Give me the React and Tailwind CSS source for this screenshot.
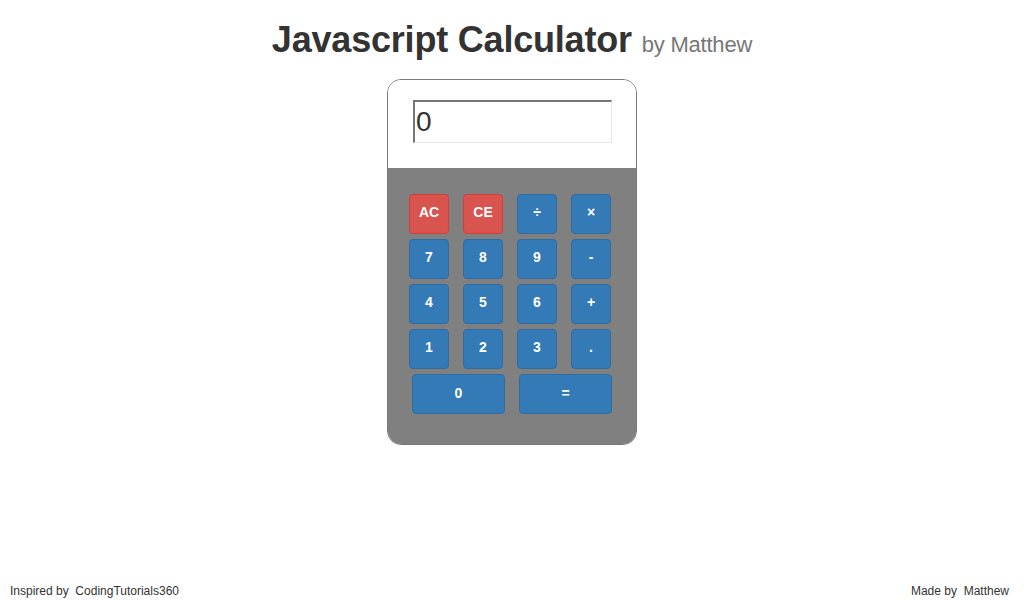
export default function App() {
  const rows = [
    [['AC', 'red'], ['CE', 'red'], ['÷', 'blue'], ['×', 'blue']],
    [['7', 'blue'], ['8', 'blue'], ['9', 'blue'], ['-', 'blue']],
    [['4', 'blue'], ['5', 'blue'], ['6', 'blue'], ['+', 'blue']],
    [['1', 'blue'], ['2', 'blue'], ['3', 'blue'], ['.', 'blue']],
  ];

  const btn = (kind) =>
    kind === 'red'
      ? 'bg-[#d9534f] border-[#d43f3a]'
      : 'bg-[#337ab7] border-[#2e6da4]';

  return (
    <div className="h-[600px] flex flex-col bg-white text-[#333] font-['Liberation_Sans',Arial,sans-serif]">
      {/* Heading */}
      <h1 className="mt-[20px] text-center text-[36px] leading-[40px] font-bold tracking-[-0.2px] text-[#333]">
        Javascript Calculator{' '}
        <span className="text-[22px] font-normal tracking-[-0.2px] text-[#777]">by Matthew</span>
      </h1>

      {/* Calculator body */}
      <div className="mx-auto mt-[14px] w-[250px] rounded-[14px] border border-[#7a7a7a] overflow-hidden">
        <div className="bg-white pt-[20px] pb-[25px] pl-[25px]">
          <div className="w-[199px] h-[43px] border-t-2 border-l-2 border-r border-b border-t-[#767676] border-l-[#767676] border-r-[#e8e8e8] border-b-[#e8e8e8] pl-[1px] flex items-center text-[28px] text-[#333]">
            0
          </div>
        </div>
        <div className="bg-[#808080] pt-[26px] pb-[30px] pl-[21px]">
          <div className="flex flex-col gap-[5px]">
            {rows.map((row, i) => (
              <div key={i} className="flex gap-[14px]">
                {row.map(([label, kind]) => (
                  <button key={label}
                    className={`w-[40px] h-[40px] rounded-[4px] border ${btn(kind)} text-white text-[14px] font-bold leading-[20px] pb-[5px] flex items-center justify-center`}>
                    {label}
                  </button>
                ))}
              </div>
            ))}
            <div className="flex gap-[14px] pl-[3px]">
              {['0', '='].map(l => (
                <button key={l}
                  className="w-[93px] h-[40px] rounded-[4px] border bg-[#337ab7] border-[#2e6da4] text-white text-[14px] font-bold leading-[20px] pb-[3px] flex items-center justify-center">
                  {l}
                </button>
              ))}
            </div>
          </div>
        </div>
      </div>

      {/* Footer */}
      <div className="mt-auto flex justify-between pl-[10px] pr-[15px] pb-[2px] text-[12px] leading-[14px] text-[#333]">
        <span>Inspired by&nbsp; CodingTutorials360</span>
        <span>Made by&nbsp; Matthew</span>
      </div>
    </div>
  );
}
